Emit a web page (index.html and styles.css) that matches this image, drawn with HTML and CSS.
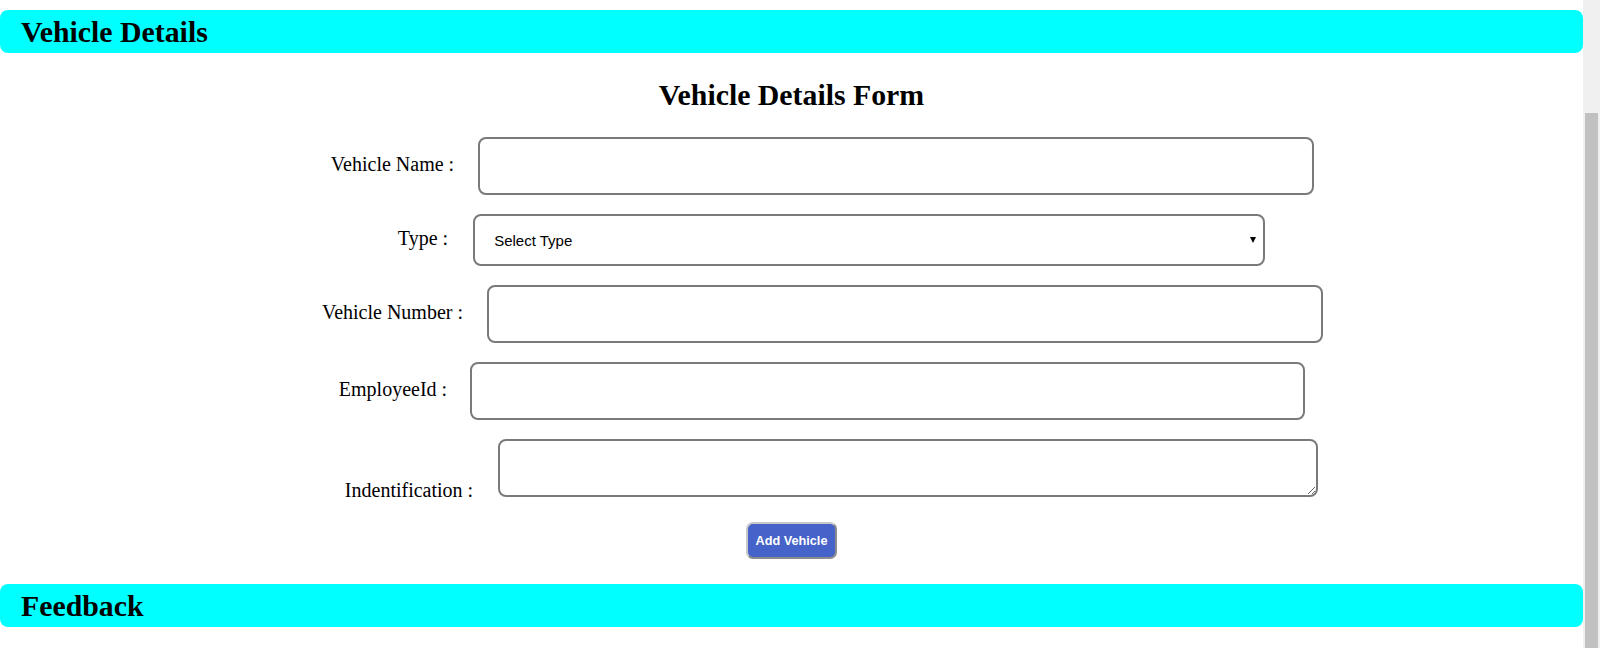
FILE: index.html
```html
<!DOCTYPE html>
<html lang="en">
<head>
<meta charset="utf-8">
<title>Vehicle Details</title>
<link rel="stylesheet" href="styles.css">
</head>
<body>
<div class="page">
  <main class="main">
    <div class="section-bar">Vehicle Details</div>
    <h2 class="form-title">Vehicle Details Form</h2>
    <form class="form">
      <div class="row row-a">
        <label class="label" for="vname">Vehicle Name :</label>
        <input class="field w835" id="vname" type="text">
      </div>
      <div class="row row-b">
        <label class="label" for="vtype">Type :</label>
        <span class="select-wrap">
          <select class="select" id="vtype">
            <option>Select Type</option>
          </select>
        </span>
      </div>
      <div class="row row-a">
        <label class="label" for="vnum">Vehicle Number :</label>
        <input class="field w835" id="vnum" type="text">
      </div>
      <div class="row row-c">
        <label class="label" for="empid">EmployeeId :</label>
        <input class="field w834" id="empid" type="text">
      </div>
      <div class="row row-b row-bottom">
        <label class="label label-bottom" for="ident">Indentification :</label>
        <textarea class="field area" id="ident"></textarea>
      </div>
      <div class="actions">
        <button class="btn" type="button">Add Vehicle</button>
      </div>
    </form>
    <div class="section-bar">Feedback</div>
  </main>
  <div class="scrollbar"><div class="thumb"></div></div>
</div>
</body>
</html>
```

FILE: styles.css
```css
html, body {
  margin: 0;
  padding: 0;
  height: 100%;
  overflow: hidden;
  background: #ffffff;
}

.page {
  display: flex;
  height: 648px;
}

.main {
  flex: 1;
  display: flex;
  flex-direction: column;
  font-family: "Liberation Serif", "Times New Roman", serif;
  color: #000;
}

.section-bar {
  margin-top: 10px;
  height: 43px;
  flex: none;
  display: flex;
  align-items: center;
  padding-left: 21px;
  background: #00ffff;
  border-radius: 8px;
  font-size: 29.8px;
  font-weight: bold;
}

.form-title {
  margin: 25px 0 26px;
  text-align: center;
  font-size: 29.8px;
  line-height: 33px;
  font-weight: bold;
}

.form {
  display: flex;
  flex-direction: column;
  gap: 19px;
  margin: 0;
}

.row {
  display: flex;
  justify-content: center;
  align-items: center;
  gap: 24px;
}

.row-a { padding-left: 62px; }
.row-b { padding-left: 80px; gap: 25px; }
.row-c { padding-left: 61px; gap: 23px; }

.row-bottom { align-items: flex-end; }

.label {
  font-size: 20px;
  margin-bottom: 4px;
  white-space: nowrap;
}

.label-bottom {
  margin-bottom: -5px;
}

.field {
  box-sizing: border-box;
  height: 58px;
  border: 2px solid #7a7a7a;
  border-radius: 8px;
  background: #fff;
  font-family: "Liberation Sans", Arial, sans-serif;
  font-size: 15px;
  padding: 0 18px;
  margin: 0;
}

.w835 { width: 836px; }
.w834 { width: 835px; }

.area {
  width: 820px;
  padding: 6px 8px;
  display: block;
}

.select-wrap {
  position: relative;
  display: block;
}

.select {
  -webkit-appearance: none;
  appearance: none;
  box-sizing: border-box;
  width: 792px;
  height: 52px;
  border: 2px solid #7a7a7a;
  border-radius: 8px;
  background: #fff;
  color: #000;
  font-family: "Liberation Sans", Arial, sans-serif;
  font-size: 15px;
  padding: 0 0 0 19px;
  margin: 0;
  display: block;
}

.select-wrap::after {
  content: "";
  position: absolute;
  right: 9px;
  top: 23px;
  border-left: 3px solid transparent;
  border-right: 3px solid transparent;
  border-top: 6px solid #000;
  pointer-events: none;
}

.actions {
  display: flex;
  justify-content: center;
  margin-top: 6px;
  margin-bottom: 15px;
}

.btn {
  box-sizing: border-box;
  width: 91px;
  height: 37px;
  background: #4563c8;
  color: #fff;
  font-family: "Liberation Sans", Arial, sans-serif;
  font-size: 12.7px;
  font-weight: bold;
  border: 2px solid;
  border-color: #c8c8c8 #8c8c8c #8c8c8c #c8c8c8;
  border-radius: 7px;
  padding: 0;
}

.scrollbar {
  width: 17px;
  flex: none;
  background: #f0f0f0;
  padding: 113px 2px 0;
  box-sizing: border-box;
  display: flex;
  flex-direction: column;
}

.thumb {
  flex: 1;
  background: #c1c1c1;
}
```
